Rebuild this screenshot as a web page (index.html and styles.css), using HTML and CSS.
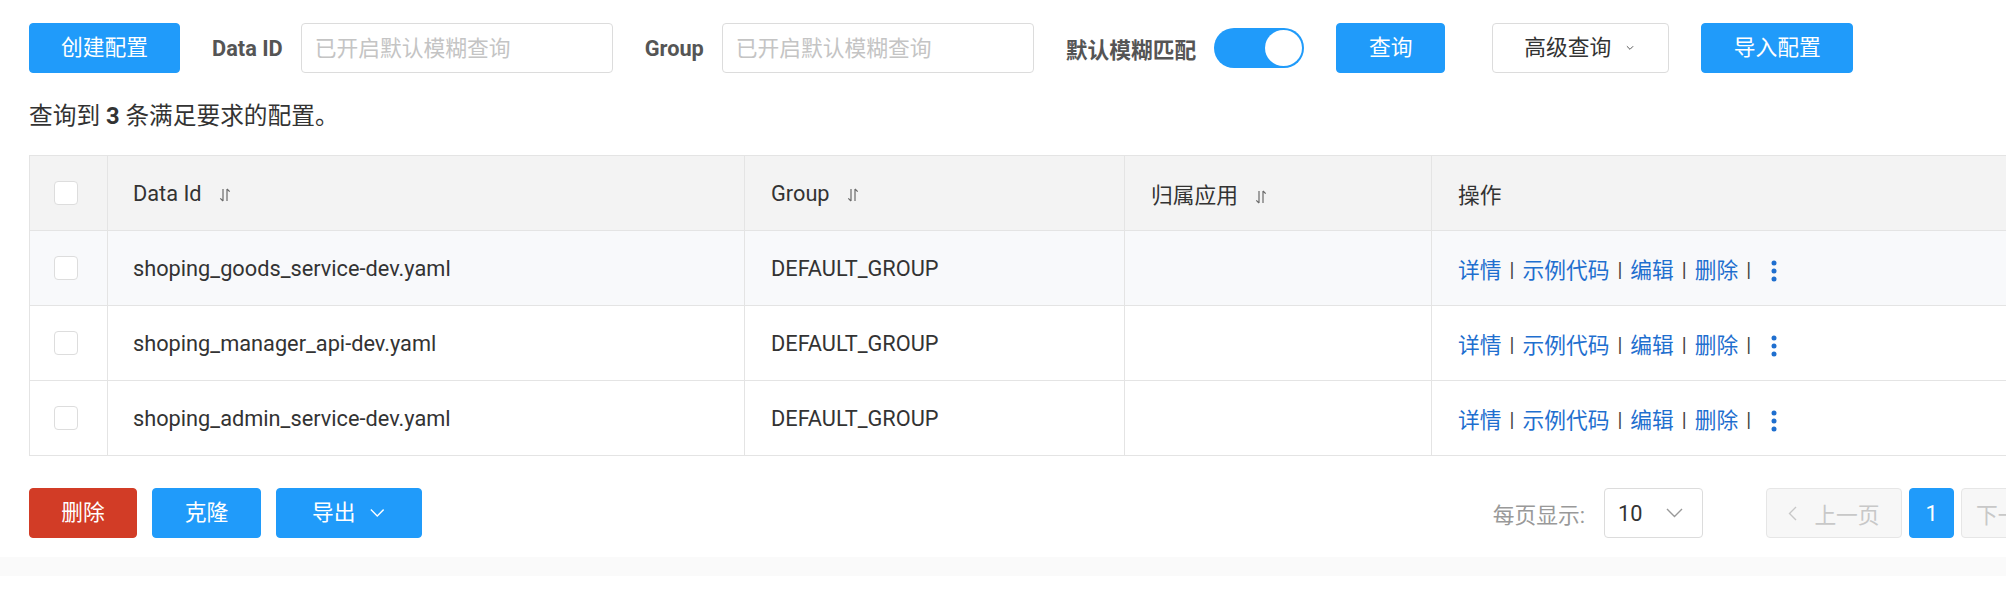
FILE: index.html
```html
<!DOCTYPE html>
<html lang="zh-CN">
<head>
<meta charset="utf-8">
<title>配置列表</title>
<link rel="stylesheet" href="styles.css">
</head>
<body>
<div class="page">
  <div class="content">
    <div class="toolbar">
      <button class="btn btn-primary btn-create">创建配置</button>
      <div class="field">
        <span class="field-label">Data ID</span>
        <input class="text-input" type="text" placeholder="已开启默认模糊查询">
      </div>
      <div class="field">
        <span class="field-label">Group</span>
        <input class="text-input" type="text" placeholder="已开启默认模糊查询">
      </div>
      <div class="field">
        <span class="field-label">默认模糊匹配</span>
        <span class="switch"><span class="switch-knob"></span></span>
      </div>
      <button class="btn btn-primary btn-query">查询</button>
      <button class="btn btn-normal btn-advanced">高级查询<svg class="caret-small" width="9" height="6" viewBox="0 0 9 6"><path d="M1 1l3.5 3.5L8 1" stroke="#555" stroke-width="1.1" fill="none"/></svg></button>
      <button class="btn btn-primary btn-import">导入配置</button>
    </div>

    <p class="summary">查询到 <b>3</b> 条满足要求的配置。</p>

    <table class="grid">
      <colgroup>
        <col class="c-check">
        <col class="c-id">
        <col class="c-group">
        <col class="c-app">
        <col class="c-ops">
      </colgroup>
      <thead>
        <tr>
          <th class="cell-check"><span class="checkbox"></span></th>
          <th>Data Id<svg class="sort" width="12" height="14" viewBox="0 0 12 14"><path d="M4 1v12M4 13L1.3 10.3M8 13V1M8 1l2.7 2.7" stroke="#6a6a6a" stroke-width="1.2" fill="none"/></svg></th>
          <th>Group<svg class="sort" width="12" height="14" viewBox="0 0 12 14"><path d="M4 1v12M4 13L1.3 10.3M8 13V1M8 1l2.7 2.7" stroke="#6a6a6a" stroke-width="1.2" fill="none"/></svg></th>
          <th>归属应用<svg class="sort" width="12" height="14" viewBox="0 0 12 14"><path d="M4 1v12M4 13L1.3 10.3M8 13V1M8 1l2.7 2.7" stroke="#6a6a6a" stroke-width="1.2" fill="none"/></svg></th>
          <th>操作</th>
        </tr>
      </thead>
      <tbody>
        <tr class="row-hover">
          <td class="cell-check"><span class="checkbox"></span></td>
          <td>shoping_goods_service-dev.yaml</td>
          <td>DEFAULT_GROUP</td>
          <td></td>
          <td class="ops"><a class="link">详情</a><span class="sep">|</span><a class="link">示例代码</a><span class="sep">|</span><a class="link">编辑</a><span class="sep">|</span><a class="link">删除</a><span class="sep">|</span><svg class="more" width="6" height="22" viewBox="0 0 6 22"><circle cx="3" cy="3" r="2.5"/><circle cx="3" cy="11" r="2.5"/><circle cx="3" cy="19" r="2.5"/></svg></td>
        </tr>
        <tr>
          <td class="cell-check"><span class="checkbox"></span></td>
          <td>shoping_manager_api-dev.yaml</td>
          <td>DEFAULT_GROUP</td>
          <td></td>
          <td class="ops"><a class="link">详情</a><span class="sep">|</span><a class="link">示例代码</a><span class="sep">|</span><a class="link">编辑</a><span class="sep">|</span><a class="link">删除</a><span class="sep">|</span><svg class="more" width="6" height="22" viewBox="0 0 6 22"><circle cx="3" cy="3" r="2.5"/><circle cx="3" cy="11" r="2.5"/><circle cx="3" cy="19" r="2.5"/></svg></td>
        </tr>
        <tr>
          <td class="cell-check"><span class="checkbox"></span></td>
          <td>shoping_admin_service-dev.yaml</td>
          <td>DEFAULT_GROUP</td>
          <td></td>
          <td class="ops"><a class="link">详情</a><span class="sep">|</span><a class="link">示例代码</a><span class="sep">|</span><a class="link">编辑</a><span class="sep">|</span><a class="link">删除</a><span class="sep">|</span><svg class="more" width="6" height="22" viewBox="0 0 6 22"><circle cx="3" cy="3" r="2.5"/><circle cx="3" cy="11" r="2.5"/><circle cx="3" cy="19" r="2.5"/></svg></td>
        </tr>
      </tbody>
    </table>

    <div class="footer-bar">
      <div class="batch">
        <button class="btn btn-danger btn-delete">删除</button>
        <button class="btn btn-primary btn-clone">克隆</button>
        <button class="btn btn-primary btn-export">导出<svg class="caret" width="17" height="10" viewBox="0 0 17 10"><path d="M1 1l7.5 7.5L16 1" stroke="#fff" stroke-width="1.6" fill="none"/></svg></button>
      </div>
      <div class="pager">
        <span class="pager-label">每页显示:</span>
        <span class="page-size">10<svg class="caret" width="17" height="10" viewBox="0 0 17 10"><path d="M1 1l7.5 7.5L16 1" stroke="#999" stroke-width="1.4" fill="none"/></svg></span>
        <span class="page-btn page-prev"><svg class="prev-arrow" width="9" height="15" viewBox="0 0 9 15"><path d="M8 1L1.5 7.5 8 14" stroke="#c8c8c8" stroke-width="1.4" fill="none"/></svg>上一页</span>
        <span class="page-btn page-current">1</span>
        <span class="page-btn page-next">下一页<svg class="next-arrow" width="9" height="15" viewBox="0 0 9 15"><path d="M1 1l6.5 6.5L1 14" stroke="#c8c8c8" stroke-width="1.4" fill="none"/></svg></span>
      </div>
    </div>
  </div>
  <div class="bottom-band"></div>
</div>
</body>
</html>
```

FILE: styles.css
```css
html, body {
  margin: 0;
  padding: 0;
  background: #ffffff;
  overflow: hidden;
}

body {
  font-family: "Roboto", "Noto Sans CJK SC", sans-serif;
  font-size: 21.76px;
  color: #333333;
}

.page {
  width: 2120px;
}

.content {
  width: 2068px;
  padding: 23px 0 0 29px;
}

/* toolbar */
.toolbar {
  display: flex;
  align-items: center;
  gap: 32px;
  height: 50px;
}

.field {
  display: flex;
  align-items: center;
  gap: 18px;
}

.field-label {
  font-weight: 700;
  color: #555555;
  white-space: nowrap;
}

.text-input {
  box-sizing: border-box;
  width: 312px;
  height: 50px;
  border: 1px solid #dcdcdc;
  border-radius: 4px;
  padding: 0 13px;
  font-family: inherit;
  font-size: 21.76px;
  color: #333333;
  outline: none;
}

.text-input::placeholder {
  color: #c4c4c4;
}

.switch {
  box-sizing: border-box;
  display: flex;
  justify-content: flex-end;
  align-items: center;
  width: 90px;
  height: 40px;
  padding: 0 2px;
  border-radius: 20px;
  background: #209bfa;
}

.switch-knob {
  width: 37px;
  height: 36px;
  border-radius: 50%;
  background: #ffffff;
}

.btn {
  box-sizing: border-box;
  display: inline-flex;
  align-items: center;
  justify-content: center;
  height: 50px;
  border: 1px solid transparent;
  border-radius: 4px;
  font-family: inherit;
  font-size: 21.76px;
  line-height: 1;
  white-space: nowrap;
  cursor: pointer;
}

.btn-primary {
  background: #209bfa;
  border-color: #209bfa;
  color: #ffffff;
}

.btn-danger {
  background: #d23c26;
  border-color: #d23c26;
  color: #ffffff;
}

.btn-normal {
  background: #ffffff;
  border-color: #dcdcdc;
  color: #333333;
}

.btn-create { width: 151px; }
.btn-query { width: 109px; }
.btn-import { width: 152px; }

.btn-advanced {
  width: 177px;
  margin-left: 15px;
  padding: 0 34px 0 31px;
  justify-content: flex-start;
}

.caret-small {
  margin-left: 15px;
}

/* summary */
.summary {
  margin: 27px 0 0;
  font-size: 23.7px;
  line-height: 32px;
  color: #333333;
}

.summary b {
  font-weight: 700;
}

/* table */
.grid {
  width: 100%;
  margin-top: 23px;
  border-collapse: collapse;
  table-layout: fixed;
}

.c-check { width: 78px; }
.c-id { width: 637px; }
.c-group { width: 380px; }
.c-app { width: 307px; }

.grid th,
.grid td {
  height: 74px;
  padding: 0 0 0 26px;
  border: 1px solid #e4e4e4;
  text-align: left;
  vertical-align: middle;
  font-weight: 400;
  color: #333333;
  white-space: nowrap;
}

.grid thead th {
  background: #f3f3f3;
}

.grid th:nth-child(2),
.grid td:nth-child(2) {
  padding-left: 25px;
}

.grid .cell-check {
  padding-left: 24px;
}

.row-hover td {
  background: #f8f9fb;
}

.checkbox {
  box-sizing: border-box;
  display: block;
  width: 24px;
  height: 24px;
  border: 1px solid #dddddd;
  border-radius: 4px;
  background: #ffffff;
}

.sort {
  margin-left: 17px;
  vertical-align: -1px;
}

.ops {
  color: #333333;
}

.link {
  color: #1f6fcf;
  text-decoration: none;
  cursor: pointer;
}

.sep {
  display: inline-block;
  margin: 0 8px;
  color: #444444;
  font-size: 20px;
  vertical-align: 1px;
}

.more {
  margin-left: 12px;
  fill: #1f6fcf;
  vertical-align: -4px;
}

/* footer */
.footer-bar {
  display: flex;
  justify-content: space-between;
  align-items: center;
  height: 50px;
  margin-top: 32px;
}

.batch {
  display: flex;
  gap: 15px;
}

.btn-delete { width: 108px; }
.btn-clone { width: 109px; }

.btn-export {
  width: 146px;
  padding: 0 37px 0 35px;
  justify-content: flex-start;
}

.btn-export .caret {
  margin-left: 14px;
}

.pager {
  display: flex;
  align-items: center;
}

.pager-label {
  color: #999999;
  margin-right: 19px;
}

.page-size {
  box-sizing: border-box;
  display: inline-flex;
  align-items: center;
  justify-content: space-between;
  width: 99px;
  height: 50px;
  padding: 0 19px 0 13px;
  border: 1px solid #dcdcdc;
  border-radius: 4px;
  color: #333333;
}

.page-btn {
  box-sizing: border-box;
  display: inline-flex;
  align-items: center;
  justify-content: center;
  height: 50px;
  border: 1px solid #e6e6e6;
  border-radius: 4px;
}

.page-prev,
.page-next {
  width: 136px;
  background: #f7f7f7;
  color: #c8c8c8;
}

.page-prev {
  margin-left: 63px;
}

.page-next {
  justify-content: flex-start;
  padding-left: 14px;
}

.prev-arrow {
  margin-right: 17px;
}

.next-arrow {
  margin-left: 17px;
}

.page-current {
  width: 45px;
  margin: 0 7px;
  background: #209bfa;
  border-color: #209bfa;
  color: #ffffff;
}

.bottom-band {
  height: 19px;
  margin-top: 19px;
  background: #fafafa;
}
```
